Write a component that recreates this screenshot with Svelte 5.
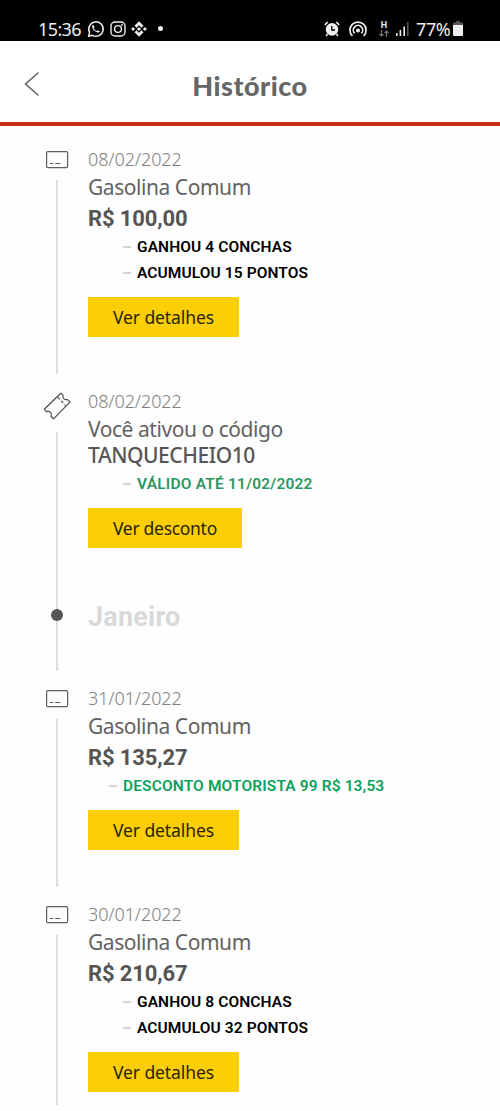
<script>
	const entries = [
		{
			type: 'card',
			date: '08/02/2022',
			title: 'Gasolina Comum',
			price: 'R$ 100,00',
			notes: ['GANHOU 4 CONCHAS', 'ACUMULOU 15 PONTOS'],
			action: 'Ver detalhes'
		},
		{
			type: 'ticket',
			date: '08/02/2022',
			title: 'Você ativou o código',
			code: 'TANQUECHEIO10',
			notes: ['VÁLIDO ATÉ 11/02/2022'],
			tone: 'valid',
			action: 'Ver desconto'
		},
		{ type: 'month', title: 'Janeiro' },
		{
			type: 'card',
			date: '31/01/2022',
			title: 'Gasolina Comum',
			price: 'R$ 135,27',
			notes: ['DESCONTO MOTORISTA 99 R$ 13,53'],
			tone: 'discount',
			action: 'Ver detalhes'
		},
		{
			type: 'card',
			date: '30/01/2022',
			title: 'Gasolina Comum',
			price: 'R$ 210,67',
			notes: ['GANHOU 8 CONCHAS', 'ACUMULOU 32 PONTOS'],
			action: 'Ver detalhes'
		}
	];
</script>

<div class="screen">
	<div class="status">
		<span class="clock">15:36</span>
		<svg class="whatsapp" width="18" height="18" viewBox="0 0 18 18" fill="none" stroke="#eee">
			<path d="M1.5 16.4 2.6 12.4A7.2 7.2 0 1 1 5.4 15.3Z" stroke-width="1.5" stroke-linejoin="round" />
			<path d="M6.1 4.7C4.4 5.7 5.2 8.5 7.2 10.6S12 13.3 13 11.6L11 10.2 9.8 11.1C8.5 10.6 7.5 9.6 6.8 8.2L7.6 7Z" fill="#eee" stroke="none" />
		</svg>
		<svg class="instagram" width="16" height="16" viewBox="0 0 16 16" fill="none" stroke="#eee" stroke-width="1.4">
			<rect x="1" y="1" width="14" height="14" rx="4" />
			<circle cx="8" cy="8" r="3.4" />
			<circle cx="12" cy="4" r=".9" fill="#eee" stroke="none" />
		</svg>
		<svg class="binance" width="16" height="16" viewBox="0 0 16 16" fill="#eee">
			<path d="M8 .2 12.5 4.7 10.5 6.7 8 4.2 5.5 6.7 3.5 4.7ZM8 15.8 3.5 11.3 5.5 9.3 8 11.8 10.5 9.3 12.5 11.3ZM8 6 10 8 8 10 6 8ZM2.1 6 4.1 8 2.1 10 .1 8ZM13.9 6 15.9 8 13.9 10 11.9 8Z" />
		</svg>
		<i class="more"></i>

		<div class="system">
			<svg class="alarm" width="16" height="16" viewBox="0 0 16 16">
				<circle cx="8" cy="8.4" r="6.3" fill="#eee" />
				<path d="M.8 4 3.7 1.2M15.2 4 12.3 1.2M3.6 13 2 15M12.4 13 14 15" stroke="#eee" stroke-width="1.6" />
				<path d="M7.8 5V9H11" fill="none" stroke="#000" stroke-width="1.3" />
			</svg>
			<svg class="hotspot" width="20" height="16" viewBox="0 0 20 16" fill="none" stroke="#eee" stroke-width="1.7">
				<path d="M4.4 15A8.1 8.1 0 1 1 15.6 15" />
				<path d="M6.6 12.4A4.7 4.7 0 1 1 13.4 12.4" />
				<circle cx="10" cy="9.4" r="2" fill="#eee" stroke="none" />
			</svg>
			<div class="network">
				<b>H</b>
				<svg width="10" height="7" viewBox="0 0 10 7" fill="none" stroke="#777" stroke-width="1.2">
					<path d="M2.5 0V6M.5 4 2.5 6 4.5 4M7.5 7V1M5.5 3 7.5 1 9.5 3" />
				</svg>
			</div>
			<svg class="signal" width="13" height="14" viewBox="0 0 13 14" fill="#eee">
				<path d="M0 11H1.6V14H0ZM3.6 8H5.2V14H3.6ZM7.4 4.5H9V14H7.4Z" />
				<path d="M11 0H12.6V14H11Z" fill="#555" />
			</svg>
			<span class="percent">77%</span>
			<svg class="battery" width="10" height="15" viewBox="0 0 10 15">
				<path d="M3 0H7V1.5H10V5H0V1.5H3Z" fill="#555" />
				<path d="M0 4H10V14Q10 15 9 15H1Q0 15 0 14Z" fill="#eee" />
			</svg>
		</div>
	</div>

	<header>
		<button class="back" aria-label="Voltar">
			<svg width="16" height="26" viewBox="0 0 16 26" fill="none" stroke="#5f5f5f" stroke-width="1.5">
				<path d="M14.5 1.5 1.5 13 14.5 24.5" />
			</svg>
		</button>
		<h1>Histórico</h1>
	</header>

	<main>
		{#each entries as entry}
			<section class="entry {entry.type}">
				<div class="rail">
					{#if entry.type === 'card'}
						<svg width="24" height="24" viewBox="0 0 24 24" fill="none" stroke="#5c5c5c">
							<rect x="1.6" y="4.6" width="21" height="16" rx="1.2" stroke-width="1.2" />
							<path d="M5 16.5H8.4M10.2 16.5H15.5" stroke-width="1.2" />
						</svg>
					{:else if entry.type === 'ticket'}
						<svg width="28" height="28" viewBox="0 0 28 28" fill="none" stroke="#4c4c4c" stroke-width="1.2" stroke-linejoin="round">
							<path d="M1.3 17.2 17.8 1.2 20.1 3.1C19 6 21.2 8.2 24.6 7.6L27 10.2 10.5 26.8 7.9 24.3C9.5 21.3 6.8 18.4 3.6 19.8Z" />
							<path d="M14.8 5.2 22.5 13.7" stroke-dasharray="3 2" />
						</svg>
					{/if}
					<div class="line">
						{#if entry.type === 'month'}<i class="dot"></i>{/if}
					</div>
				</div>

				<div class="body">
					{#if entry.type === 'month'}
						<h2>{entry.title}</h2>
					{:else}
						<time>{entry.date}</time>
						<p class="title">{entry.title}</p>
						{#if entry.price}<p class="price">{entry.price}</p>{/if}
						{#if entry.code}<p class="code">{entry.code}</p>{/if}
						<ul class={entry.tone}>
							{#each entry.notes as note}
								<li>{note}</li>
							{/each}
						</ul>
						<button class="action">{entry.action}</button>
					{/if}
				</div>
			</section>
		{/each}
	</main>
</div>

<style>
	:global(body) { margin: 0; background: #fefefe; }
	.screen { width: 500px; height: 1111px; overflow: hidden; font-family: "Noto Sans", sans-serif; color: #555; }
	p, h1, h2, ul { margin: 0; padding: 0; }
	svg { display: block; flex: none; }
	button { border: 0; padding: 0; background: none; font-family: inherit; }

	.status { display: flex; align-items: center; box-sizing: border-box; height: 41px; padding: 16px 37px 0 38px; background: #000; color: #eee; }
	.clock { width: 49px; font-size: 18px; line-height: 22px; letter-spacing: -0.6px; }
	.instagram { margin-left: 5px; }
	.binance { margin-left: 5px; }
	.more { width: 5px; height: 5px; margin-left: 11px; border-radius: 50%; background: #eee; }
	.system { display: flex; align-items: center; margin-left: auto; }
	.hotspot { margin-left: 8px; }
	.network { display: flex; flex-direction: column; align-items: center; margin-left: 11px; }
	.network b { font: bold 9px/9px Roboto, sans-serif; }
	.signal { margin-left: 7px; }
	.percent { width: 35px; margin-left: 7px; font-size: 18px; line-height: 22px; letter-spacing: -0.4px; white-space: nowrap; }
	.battery { margin-left: 2px; }

	header { display: grid; grid-template-columns: 64px 1fr 64px; align-items: center; height: 81px; border-bottom: 4px solid #cd2e17; background: #fff; }
	.back { padding: 5px 0 0 24px; }
	h1 { padding-top: 8px; text-align: center; font: 900 27px/32px Lato, sans-serif; letter-spacing: 0.5px; color: #666; }

	main { padding: 21px 0 0 45px; }
	.entry { display: flex; height: 242px; }
	.entry:nth-child(4) { height: 216px; }
	.entry:last-child { height: 218px; }
	.entry.ticket { height: 175px; }
	.entry.month { height: 122px; }
	.rail { display: flex; flex-direction: column; align-items: center; width: 24px; padding-bottom: 15px; }
	.line { flex: 1; width: 1.5px; margin-top: 9px; background: #dedede; }
	.ticket .rail { padding-bottom: 0; }
	.ticket .rail svg { margin-top: 3px; }
	.ticket .line { margin-top: 12px; }
	.month .line { position: relative; margin-top: 0; }
	.dot { position: absolute; top: 45px; left: -5px; width: 12px; height: 12px; border-radius: 50%; background: #555; }

	.body { display: flex; flex-direction: column; align-items: flex-start; padding-left: 19px; white-space: nowrap; }
	time { font-size: 18px; font-weight: 300; line-height: 24px; letter-spacing: -0.1px; color: #808080; }
	.title { margin: 3px 0 1px; font-size: 21px; font-weight: 400; line-height: 26px; letter-spacing: -0.45px; color: #636363; }
	.price { margin-top: 5px; font: 700 22px/26px Roboto, sans-serif; letter-spacing: -0.15px; }
	.code { margin: -1px 0 1px; font-size: 21px; font-weight: 500; line-height: 26px; letter-spacing: -0.45px; }
	ul { margin: 2px 0 0 35px; list-style: none; }
	li { display: flex; align-items: center; font: 600 15.5px/26px Roboto, sans-serif; letter-spacing: 0.1px; color: #000; }
	li::before { content: ""; width: 8px; height: 1.5px; margin-right: 6px; background: #d4d4d4; }
	.valid { margin-top: 2px; }
	.valid li { letter-spacing: 0.2px; color: #2c9660; }
	.discount { margin-left: 21px; }
	.discount li { letter-spacing: 0.13px; color: #0ba15c; }
	.action { height: 40px; margin-top: 11px; padding: 0 25px 1px; background: #fbce07; color: #292407; font-size: 17.5px; font-weight: 400; letter-spacing: -0.1px; }
	.ticket .action { letter-spacing: -0.3px; }
	h2 { margin-top: 36px; font: 700 27px/34px Roboto, sans-serif; letter-spacing: 0.2px; color: #d9d9d9; }
</style>
